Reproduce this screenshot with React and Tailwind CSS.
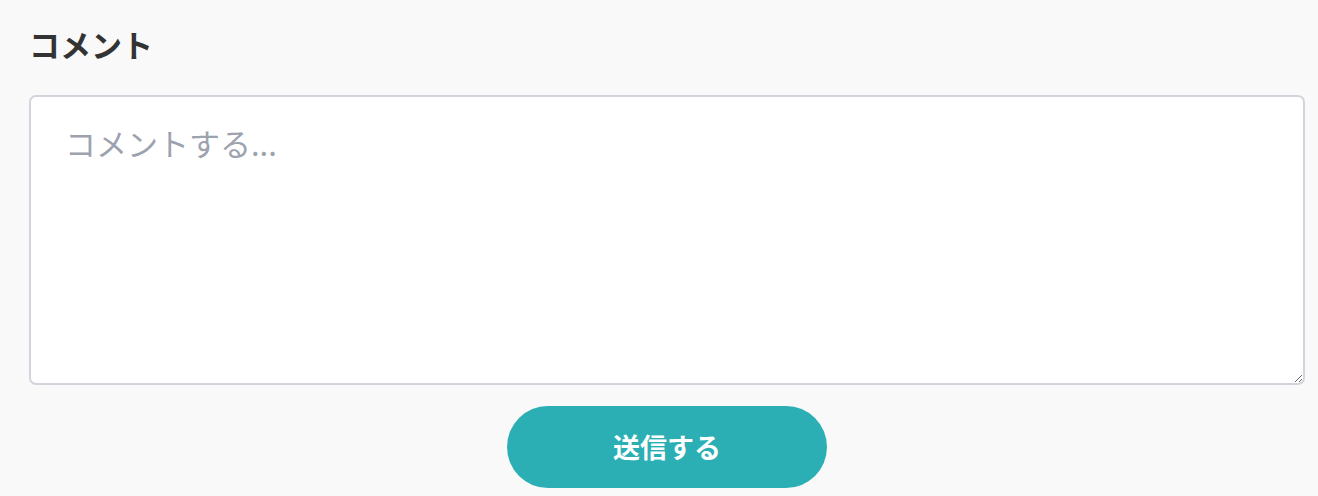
export default function App() {
  return (
    <div
      className="min-h-[496px] w-full bg-[#f9f9f9] pl-[29px] pr-[13px] pt-[24px]"
      style={{ fontFamily: '"Noto Sans CJK JP", "Noto Sans", sans-serif' }}
    >
      <h2 className="text-[31px] font-bold leading-[40px] text-[#333333]">コメント</h2>
      <textarea
        className="mt-[31px] block h-[290px] w-full resize-y rounded-[7px] border-2 border-[#d1d5db] bg-white px-[34px] py-[24px] text-[31px] leading-[44px] text-[#333333] outline-none placeholder:text-[#9ca3af]"
        placeholder="コメントする..."
      />
      <div className="mt-[21px] flex justify-center">
        <button className="h-[82px] w-[320px] rounded-full bg-[#2cafb4] text-[27px] font-bold text-white">
          送信する
        </button>
      </div>
    </div>
  );
}
